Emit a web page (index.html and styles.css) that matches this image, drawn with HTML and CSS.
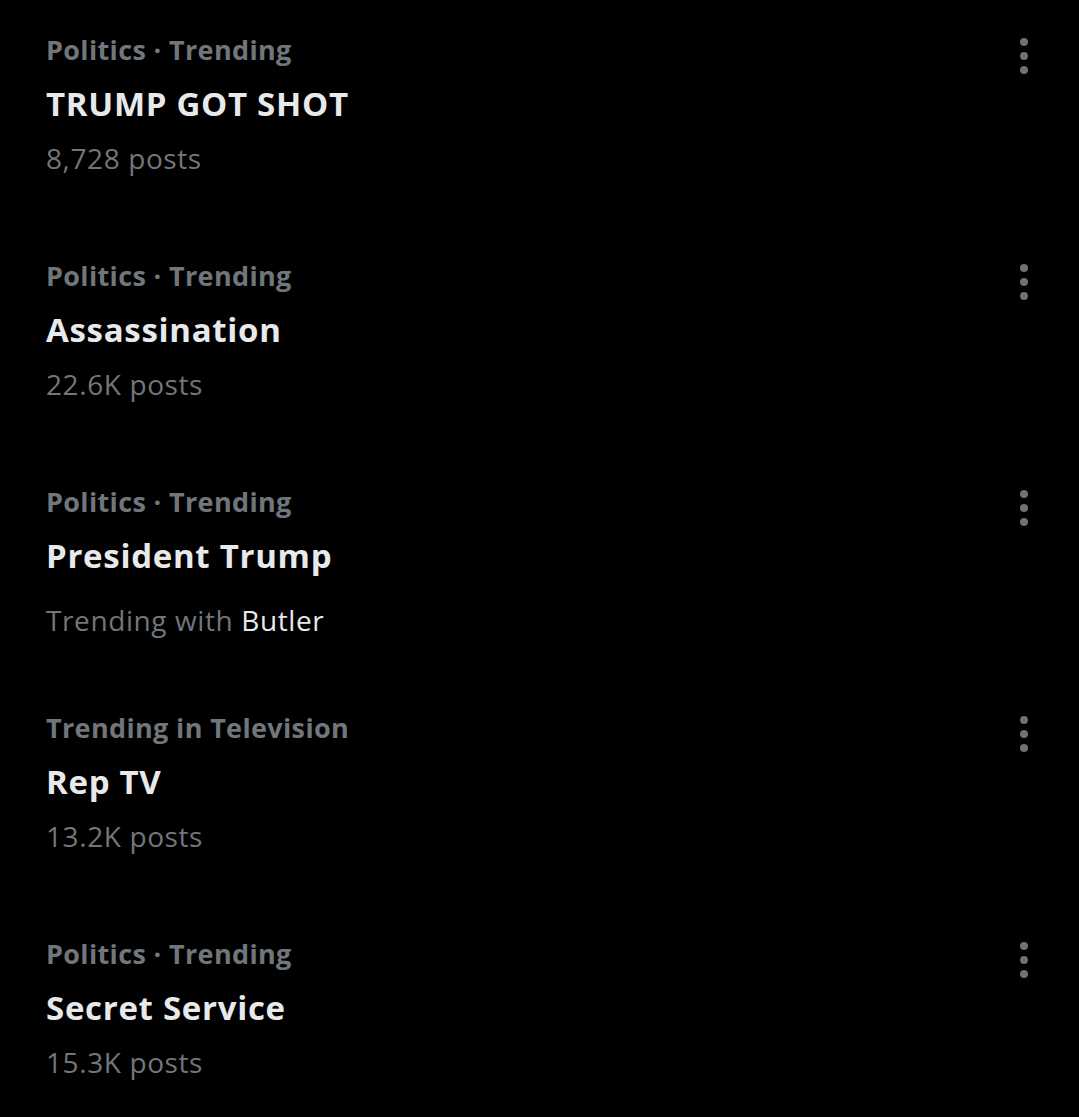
FILE: index.html
```html
<!DOCTYPE html>
<html lang="en">

<head>
    <meta charset="UTF-8">
    <meta name="viewport" content="width=device-width, initial-scale=1.0">
    <title>Trending</title>
    <link rel="stylesheet" href="styles.css">
</head>

<body>
    <div class="trends">
        <div class="trend">
            <div class="trend-body">
                <div class="trend-category">Politics · Trending</div>
                <div class="trend-title">TRUMP GOT SHOT</div>
                <div class="trend-meta">8,728 posts</div>
            </div>
            <button class="trend-more" type="button" aria-label="More">
                <svg viewBox="0 0 12 36" width="12" height="36"><circle cx="6" cy="4" r="4"/><circle cx="6" cy="18" r="4"/><circle cx="6" cy="32" r="4"/></svg>
            </button>
        </div>
        <div class="trend">
            <div class="trend-body">
                <div class="trend-category">Politics · Trending</div>
                <div class="trend-title">Assassination</div>
                <div class="trend-meta">22.6K posts</div>
            </div>
            <button class="trend-more" type="button" aria-label="More">
                <svg viewBox="0 0 12 36" width="12" height="36"><circle cx="6" cy="4" r="4"/><circle cx="6" cy="18" r="4"/><circle cx="6" cy="32" r="4"/></svg>
            </button>
        </div>
        <div class="trend">
            <div class="trend-body">
                <div class="trend-category">Politics · Trending</div>
                <div class="trend-title">President Trump</div>
                <div class="trend-meta trend-with">Trending with <span>Butler</span></div>
            </div>
            <button class="trend-more" type="button" aria-label="More">
                <svg viewBox="0 0 12 36" width="12" height="36"><circle cx="6" cy="4" r="4"/><circle cx="6" cy="18" r="4"/><circle cx="6" cy="32" r="4"/></svg>
            </button>
        </div>
        <div class="trend">
            <div class="trend-body">
                <div class="trend-category">Trending in Television</div>
                <div class="trend-title">Rep TV</div>
                <div class="trend-meta">13.2K posts</div>
            </div>
            <button class="trend-more" type="button" aria-label="More">
                <svg viewBox="0 0 12 36" width="12" height="36"><circle cx="6" cy="4" r="4"/><circle cx="6" cy="18" r="4"/><circle cx="6" cy="32" r="4"/></svg>
            </button>
        </div>
        <div class="trend">
            <div class="trend-body">
                <div class="trend-category">Politics · Trending</div>
                <div class="trend-title">Secret Service</div>
                <div class="trend-meta">15.3K posts</div>
            </div>
            <button class="trend-more" type="button" aria-label="More">
                <svg viewBox="0 0 12 36" width="12" height="36"><circle cx="6" cy="4" r="4"/><circle cx="6" cy="18" r="4"/><circle cx="6" cy="32" r="4"/></svg>
            </button>
        </div>
    </div>
</body>

</html>
```

FILE: styles.css
```css
* {
    box-sizing: border-box;
    margin: 0;
    padding: 0;
}

body {
    background: #000;
    font-family: "Open Sans", Roboto, "Liberation Sans", sans-serif;
    color: #e7e9ea;
}

.trends {
    display: flex;
    flex-direction: column;
    padding: 23px 49px 0 46px;
}

.trend {
    height: 226px;
    display: flex;
    justify-content: space-between;
    align-items: flex-start;
}

.trend-body {
    display: flex;
    flex-direction: column;
}

.trend-category {
    font-size: 27px;
    line-height: 54px;
    font-weight: 700;
    letter-spacing: 0.35px;
    color: #71767b;
}

.trend-title {
    font-size: 33px;
    line-height: 54px;
    font-weight: 700;
    letter-spacing: 0.7px;
    color: #e7e9ea;
}

.trend-meta {
    font-size: 28px;
    line-height: 54px;
    letter-spacing: 0.6px;
    color: #71767b;
}

.trend-with {
    margin-top: 10px;
}

.trend-with span {
    color: #e7e9ea;
}

.trend-more {
    border: none;
    background: none;
    margin-top: 15px;
    fill: #6e7175;
    display: flex;
}
```
